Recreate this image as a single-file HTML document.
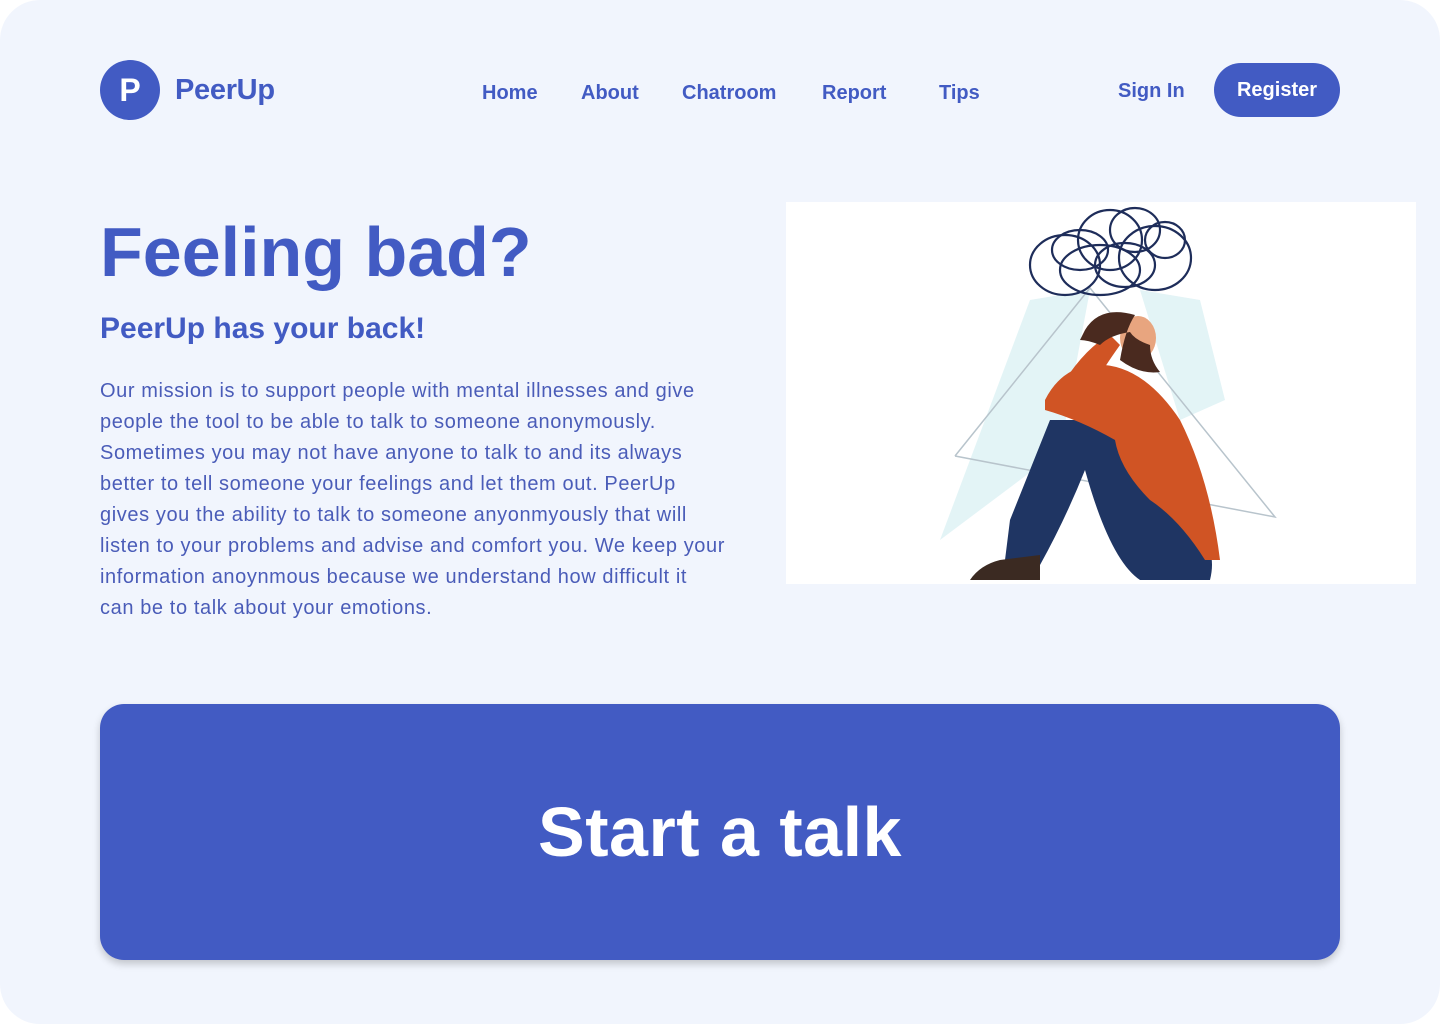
<!DOCTYPE html>
<html><head><meta charset="utf-8"><style>
html,body{margin:0;padding:0;background:#fff;}
body{width:1440px;height:1024px;position:relative;overflow:hidden;font-family:"Liberation Sans",sans-serif;}
.page{position:absolute;left:0;top:0;width:1440px;height:1024px;background:#f1f5fd;border-radius:40px;}
.logo{position:absolute;left:100px;top:60px;width:60px;height:60px;border-radius:50%;background:#425bc3;color:#fff;font-weight:bold;font-size:32px;text-align:center;line-height:60px;}
.brand{position:absolute;left:175px;top:74px;font-size:29px;font-weight:bold;color:#425bc3;letter-spacing:-0.3px;}
.nav{position:absolute;top:82px;font-size:20px;color:#425bc3;font-weight:bold;}
.reg{position:absolute;left:1214px;top:63px;width:126px;height:54px;border-radius:27px;background:#425bc3;color:#fff;font-size:20px;font-weight:bold;text-align:center;line-height:54px;}
h1{position:absolute;left:100px;top:212px;margin:0;font-size:70px;color:#425bc3;font-weight:bold;}
h2{position:absolute;left:100px;top:312px;margin:0;font-size:30px;color:#425bc3;font-weight:bold;}
p{position:absolute;left:100px;top:376px;margin:0;white-space:nowrap;font-size:20px;line-height:31px;color:#4a5cb8;letter-spacing:0.6px;}
.img{position:absolute;left:786px;top:202px;width:630px;height:382px;background:#fff;}
.btn{position:absolute;left:100px;top:704px;width:1240px;height:256px;background:#425bc3;border-radius:24px;box-shadow:0 4px 8px rgba(0,0,0,0.2);color:#fff;font-size:70px;font-weight:bold;text-align:center;line-height:256px;letter-spacing:0.5px;}
</style></head><body><div class="page">
<div class="logo">P</div><div class="brand">PeerUp</div>
<div class="nav" style="left:482px">Home</div>
<div class="nav" style="left:581px">About</div>
<div class="nav" style="left:682px">Chatroom</div>
<div class="nav" style="left:822px">Report</div>
<div class="nav" style="left:939px">Tips</div>
<div class="nav" style="left:1118px;top:80px">Sign In</div>
<div class="reg">Register</div>
<h1>Feeling bad?</h1>
<h2>PeerUp has your back!</h2>
<p>Our mission is to support people with mental illnesses and give<br>people the tool to be able to talk to someone anonymously.<br>Sometimes you may not have anyone to talk to and its always<br>better to tell someone your feelings and let them out. PeerUp<br>gives you the ability to talk to someone anyonmyously that will<br>listen to your problems and advise and comfort you. We keep your<br>information anoynmous because we understand how difficult it<br>can be to talk about your emotions.</p>
<div class="img"><svg width="630" height="382" viewBox="786 202 630 382">
<polygon points="1030,300 1090,290 1060,450 940,540" fill="#e3f4f6"/>
<polygon points="1140,290 1200,300 1225,400 1180,420" fill="#e3f4f6"/>
<polyline points="955,456 1090,288 1275,517 955,456" fill="none" stroke="#b8c4cc" stroke-width="1.5"/>
<g fill="none" stroke="#1e2d5a" stroke-width="2.2">
<ellipse cx="1065" cy="265" rx="35" ry="30"/><ellipse cx="1110" cy="240" rx="32" ry="30"/>
<ellipse cx="1155" cy="258" rx="36" ry="32"/><ellipse cx="1100" cy="270" rx="40" ry="25"/>
<ellipse cx="1135" cy="230" rx="25" ry="22"/><ellipse cx="1080" cy="250" rx="28" ry="20"/>
<ellipse cx="1125" cy="265" rx="30" ry="22"/><ellipse cx="1165" cy="240" rx="20" ry="18"/>
</g>
<path d="M1050,420 Q1030,470 1010,520 L1005,560 L1040,565 Q1065,520 1085,470 Q1110,560 1140,580 L1210,580 Q1220,540 1180,520 Q1140,480 1120,420 Z" fill="#1f3563"/>
<path d="M1045,400 Q1060,370 1090,365 Q1140,360 1180,420 Q1210,480 1220,560 L1205,560 Q1180,520 1150,500 Q1120,470 1115,440 Q1080,420 1045,410 Z" fill="#d05424"/>
<path d="M1050,405 Q1080,350 1110,335 L1120,345 Q1095,380 1090,395 Z" fill="#d05424"/>
<ellipse cx="1138" cy="338" rx="18" ry="22" fill="#e8a57f"/>
<path d="M1085,330 Q1100,305 1135,315 Q1125,330 1120,360 Q1140,375 1160,372 Q1150,360 1150,345 Q1135,340 1130,332 Q1110,335 1100,345 Q1088,340 1080,340 Z" fill="#4a2a1f"/>
<path d="M1000,560 L1040,555 L1040,580 L970,580 Q980,565 1000,560 Z" fill="#3b2a22"/>
</svg></div>
<div class="btn">Start a talk</div>
</div></body></html>
